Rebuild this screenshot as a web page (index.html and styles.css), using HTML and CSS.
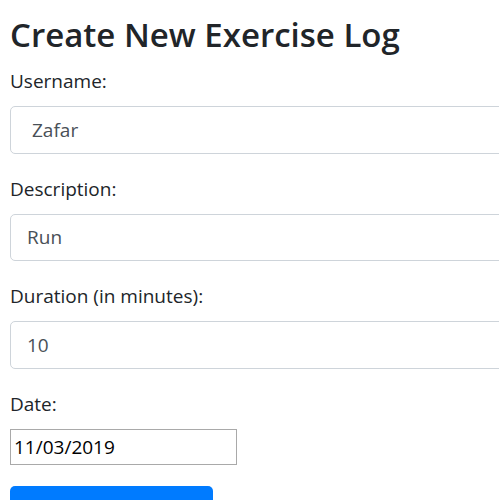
FILE: index.html
```html
<!DOCTYPE html>
<html>
<head>
<meta charset="utf-8">
<link rel="stylesheet" href="styles.css">
</head>
<body>
<div class="page">
  <h3 class="title">Create New Exercise Log</h3>
  <form class="form">
    <div class="form-group">
      <label class="label">Username:</label>
      <div class="form-control select">Zafar</div>
    </div>
    <div class="form-group">
      <label class="label">Description:</label>
      <div class="form-control">Run</div>
    </div>
    <div class="form-group">
      <label class="label">Duration (in minutes):</label>
      <div class="form-control">10</div>
    </div>
    <div class="form-group">
      <label class="label">Date:</label>
      <div class="date-input">11/03/2019</div>
    </div>
    <div class="form-group">
      <div class="btn">Create Exercise Log</div>
    </div>
  </form>
</div>
</body>
</html>
```
FILE: styles.css
```css
html, body {
  margin: 0;
  padding: 0;
  background: #fff;
  overflow: hidden;
}
body {
  font-family: "Open Sans", "Noto Sans", sans-serif;
  color: #212529;
  font-size: 19px;
  line-height: 30px;
}
.page {
  padding: 14px 0 0 10px;
  width: 560px;
}
.title {
  font-size: 33px;
  font-weight: 600;
  line-height: 42px;
  margin: 0 0 10px 0;
}
.form {
  margin: 0;
}
.form-group {
  margin-bottom: 20px;
}
.label {
  display: block;
  margin-bottom: 10px;
}
.form-control {
  box-sizing: border-box;
  height: 47.5px;
  padding: 7.5px 16px;
  border: 1px solid #ced4da;
  border-radius: 5px;
  color: #495057;
  background: #fff;
}
.select {
  padding-left: 21px;
}
.date-input {
  box-sizing: border-box;
  width: 227px;
  height: 36px;
  border: 1px solid #a9a9a9;
  padding: 2px 3px;
  color: #000;
  line-height: 30px;
}
.btn {
  display: inline-block;
  width: 203px;
  height: 47.5px;
  box-sizing: border-box;
  background: #007bff;
  border-radius: 5px;
  color: #fff;
  text-align: center;
  line-height: 45px;
  margin-top: 1px;
}
```
